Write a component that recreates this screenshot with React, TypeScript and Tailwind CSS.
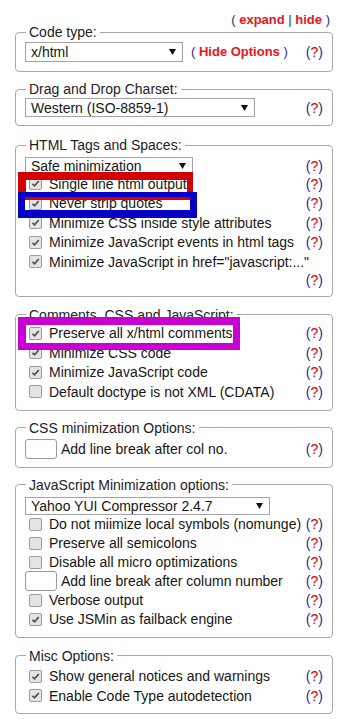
import React from 'react';

const FONT = { fontFamily: '"Liberation Sans", Arial, sans-serif' };

const Help: React.FC<{ className?: string }> = ({ className = '' }) => (
  <span className={`text-[14px] leading-[16px] whitespace-nowrap ${className}`}>
    <span className="text-[#2a2a8c]">(</span>
    <span className="text-[#e00000]">?</span>
    <span className="text-[#2a2a8c]">)</span>
  </span>
);

const Check: React.FC<{ checked?: boolean }> = ({ checked }) => (
  <span className="ml-[4px] w-[13px] h-[13px] shrink-0 rounded-[2px] border border-[#9c9c9c] bg-[#e4e4e4] flex items-center justify-center">
    {checked && (
      <svg width="9" height="9" viewBox="0 0 10 10">
        <path d="M1.6 5.3 L4 7.6 L8.6 2.2" stroke="#505050" strokeWidth="1.9" fill="none" />
      </svg>
    )}
  </span>
);

const Row: React.FC<{ label: string; checked?: boolean; h?: string; help?: boolean }> = ({
  label,
  checked,
  h = 'h-[19.5px]',
  help = true,
}) => (
  <div className={`flex items-center ${h}`}>
    <Check checked={checked} />
    <span className="ml-[7px] text-[14px] leading-[16px] text-[#161616] whitespace-nowrap">{label}</span>
    {help && <Help className="ml-auto" />}
  </div>
);

const Select: React.FC<{ value: string; className: string }> = ({ value, className }) => (
  <div className={`flex items-center border border-[#a3a3a3] bg-white pl-[5px] pr-[6px] ${className}`}>
    <span className="text-[14px] leading-[16px] text-[#161616] whitespace-nowrap">{value}</span>
    <svg className="ml-auto" width="7" height="6" viewBox="0 0 7 6">
      <path d="M0 0 H7 L3.5 6 Z" fill="#111" />
    </svg>
  </div>
);

const Box: React.FC<{ className?: string }> = ({ className = '' }) => (
  <span className={`block w-[32px] h-[20px] rounded-[3px] border border-[#9a9a9a] bg-white shrink-0 ${className}`} />
);

const Fieldset: React.FC<{ legend: string; className: string; children: React.ReactNode }> = ({
  legend,
  className,
  children,
}) => (
  <fieldset className={`ml-[15px] w-[318px] border border-[#a8a8a8] rounded-[4px] px-[9px] ${className}`}>
    <legend className="ml-[1px] px-[3px] text-[14px] leading-[16px] text-[#222]">{legend}</legend>
    {children}
  </fieldset>
);

export default function App() {
  return (
    <div className="relative w-[341px] h-[725px] bg-white overflow-hidden" style={FONT}>
      <div className="mt-[12px] h-[16px] pr-[11px] text-right text-[13px] leading-[16px] font-bold">
        <span className="text-[#2a2a8c] font-normal">( </span>
        <span className="text-[#e8141e]">expand</span>
        <span className="text-[#2a2a8c] font-normal"> | </span>
        <span className="text-[#e8141e]">hide</span>
        <span className="text-[#2a2a8c] font-normal"> )</span>
      </div>

      <Fieldset legend="Code type:" className="mt-[-4px] pt-[2px] pb-[9px]">
        <div className="flex items-center h-[20px]">
          <Select value="x/html" className="w-[158px] h-[20px]" />
          <span className="ml-[8px] text-[13px] leading-[16px] font-bold whitespace-nowrap">
            <span className="text-[#2a2a8c] font-normal">( </span>
            <span className="text-[#e8141e]">Hide Options</span>
            <span className="text-[#2a2a8c] font-normal"> )</span>
          </span>
          <Help className="ml-auto" />
        </div>
      </Fieldset>

      <Fieldset legend="Drag and Drop Charset:" className="mt-[9px] pt-[1px] pb-[8px]">
        <div className="flex items-center h-[19px]">
          <Select value="Western (ISO-8859-1)" className="w-[230px] h-[19px]" />
          <Help className="ml-auto" />
        </div>
      </Fieldset>

      <Fieldset legend="HTML Tags and Spaces:" className="mt-[11px] pt-[4px] pb-[7px]">
        <div className="flex items-center h-[17px]">
          <Select value="Safe minimization" className="w-[168px] h-[18px]" />
          <Help className="ml-auto" />
        </div>
        <Row checked label="Single line html output" />
        <Row checked label="Never strip quotes" />
        <Row checked label="Minimize CSS inside style attributes" />
        <Row checked label="Minimize JavaScript events in html tags" />
        <Row checked label={'Minimize JavaScript in href="javascript:..."'} help={false} />
        <div className="flex items-center justify-end h-[17px]">
          <Help />
        </div>
      </Fieldset>

      <Fieldset legend="Comments, CSS and JavaScript:" className="mt-[10px] pt-[1px] pb-[8px]">
        <Row checked label="Preserve all x/html comments" />
        <Row checked label="Minimize CSS code" />
        <Row checked label="Minimize JavaScript code" />
        <Row label="Default doctype is not XML (CDATA)" />
      </Fieldset>

      <Fieldset legend="CSS minimization Options:" className="mt-[9px] pt-[3px] pb-[8px]">
        <div className="flex items-center h-[20px]">
          <Box />
          <span className="ml-[4px] text-[14px] leading-[16px] text-[#161616]">Add line break after col no.</span>
          <Help className="ml-auto" />
        </div>
      </Fieldset>

      <Fieldset legend="JavaScript Minimization options:" className="mt-[9px] pt-[5px] pb-[8px]">
        <div className="flex items-center h-[17px]">
          <Select value="Yahoo YUI Compressor 2.4.7" className="w-[245px] h-[18px]" />
        </div>
        <Row h="h-[19px]" label="Do not miimize local symbols (nomunge)" />
        <Row h="h-[19px]" label="Preserve all semicolons" />
        <Row h="h-[19px]" label="Disable all micro optimizations" />
        <div className="flex items-center h-[19px]">
          <Box className="h-[18px]" />
          <span className="ml-[4px] text-[14px] leading-[16px] text-[#161616]">Add line break after column number</span>
          <Help className="ml-auto" />
        </div>
        <Row h="h-[19px]" label="Verbose output" />
        <Row h="h-[19px]" checked label="Use JSMin as failback engine" />
      </Fieldset>

      <Fieldset legend="Misc Options:" className="mt-[10px] pt-[3px] pb-[7px]">
        <Row checked label="Show general notices and warnings" />
        <Row checked label="Enable Code Type autodetection" />
      </Fieldset>

      {/* highlight boxes drawn over the form */}
      <div className="absolute left-[18px] top-[172px] w-[175px] h-[28px] border-t-[8px] border-l-[8px] border-r-[6px] border-b-[6px] border-[#d20000]" />
      <div className="absolute left-[18px] top-[192px] w-[179px] h-[26px] border-t-[5px] border-l-[7px] border-r-[7px] border-b-[8px] border-[#0800c4]" />
      <div className="absolute left-[18px] top-[317px] w-[222px] h-[33px] border-t-[8px] border-l-[8px] border-r-[7px] border-b-[7px] border-[#c800d2]" />
    </div>
  );
}
